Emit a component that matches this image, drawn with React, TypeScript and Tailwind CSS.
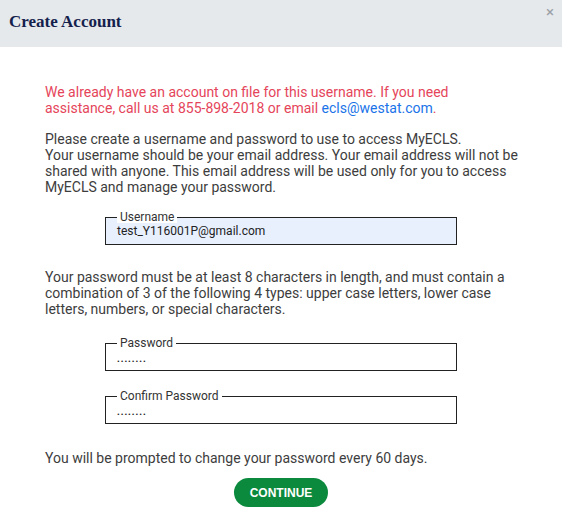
import React from 'react'

const Field = ({ label, value, filled, secret }: { label: string; value: string; filled?: boolean; secret?: boolean }) => {
  return (
    <fieldset
      className={`mx-auto w-[352px] border-[1.5px] border-[#222] px-[11px] pb-[6px] pt-0 ${filled ? 'bg-[#e8f0fe]' : 'bg-white'}`}
    >
      <legend className="bg-white px-[3px] text-[12px] leading-[12px] text-[#333]">{label}</legend>
      {secret ? (
        <div className="mt-[1px] h-[14px] text-[8px] leading-[24px] tracking-[1px] text-[#222]">{value}</div>
      ) : (
        <div className="mt-[1px] text-[12px] leading-[14px] text-[#222]">{value}</div>
      )}
    </fieldset>
  )
}

const App = () => {
  return (
    <div className="h-[520px] w-[562px] bg-white font-['Roboto',sans-serif] text-[#3d3d3d]">
      <div className="relative flex h-[47px] items-center bg-[#e5e9ec] px-[9px] pb-[4px]">
        <h2 className="font-['Liberation_Serif',serif] text-[17px] font-bold text-[#14214d]">Create Account</h2>
        <button className="absolute right-[8px] top-[5px] text-[15px] leading-none text-[#9aa0a6]">×</button>
      </div>

      <div className="pl-[45px] pr-[40px] pt-[37px] text-[14px] leading-[16px]">
        <p className="text-[#e5455a]">
          We already have an account on file for this username. If you need assistance, call us at 855-898-2018 or
          email <span className="text-[#1a73e8]">ecls@westat.com</span>.
        </p>

        <p className="mt-[15px]">
          Please create a username and password to use to access MyECLS.
          <br />
          Your username should be your email address. Your email address will not be shared with anyone. This email
          address will be used only for you to access MyECLS and manage your password.
        </p>

        <div className="mt-[16px] pr-[5px]">
          <Field label="Username" value="test_Y116001P@gmail.com" filled />
        </div>

        <p className="mt-[24px]">
          Your password must be at least 8 characters in length, and must contain a combination of 3 of the following
          4 types: upper case letters, lower case letters, numbers, or special characters.
        </p>

        <div className="mt-[20px] flex flex-col gap-[19px] pr-[5px]">
          <Field label="Password" value="••••••••" secret />
          <Field label="Confirm Password" value="••••••••" secret />
        </div>

        <p className="mt-[26px]">You will be prompted to change your password every 60 days.</p>

        <div className="mt-[12px] flex justify-center pr-[5px]">
          <button className="h-[29px] w-[94px] rounded-full bg-[#0b8a3e] font-['Liberation_Sans',sans-serif] text-[12px] font-bold text-white">
            CONTINUE
          </button>
        </div>
      </div>
    </div>
  )
}

export default App
